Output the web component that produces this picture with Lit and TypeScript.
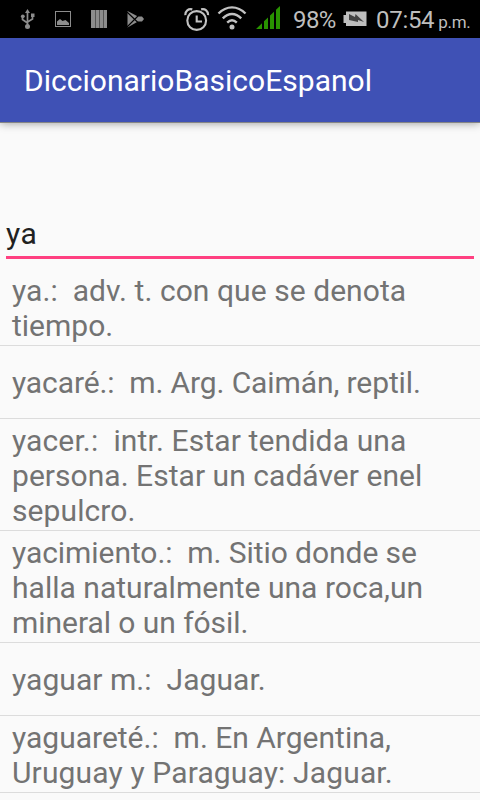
import { LitElement, html, css } from "lit";
import { customElement } from "lit/decorators.js";

interface Line { text: string; spacing: number; }
interface Entry { lines: Line[]; height: number; }

const line = (text: string, spacing = 0): Line => ({ text, spacing });

const ENTRIES: Entry[] = [
  { lines: [line("ya.:\u00a0 adv. t. con que se denota", 0.06), line("tiempo.")], height: 77 },
  { lines: [line("yacaré.:\u00a0 m. Arg. Caimán, reptil.", -0.1)], height: 73 },
  { lines: [line("yacer.:\u00a0 intr. Estar tendida una", 0.12), line("persona. Estar un cadáver enel", 0.04), line("sepulcro.", 0.1)], height: 112 },
  { lines: [line("yacimiento.:\u00a0 m. Sitio donde se", -0.06), line("halla naturalmente una roca,un", 0.02), line("mineral o un fósil.", -0.05)], height: 112 },
  { lines: [line("yaguar m.:\u00a0 Jaguar.", 0.05)], height: 73 },
  { lines: [line("yaguareté.:\u00a0 m. En Argentina,"), line("Uruguay y Paraguay: Jaguar.", 0.14)], height: 77 },
];

@customElement("status-bar")
export class StatusBar extends LitElement {
  static styles = css`
    :host { display: flex; height: 38px; background: #000; color: #bebebe; font-family: Roboto, sans-serif; }
    svg { flex: none; }
    .left { width: 292px; }
    .pct { width: 50px; font-size: 24px; line-height: 41px; letter-spacing: -0.6px; padding-left: 1px; box-sizing: border-box; }
    .battery { width: 34px; }
    .time { font-size: 24px; line-height: 41px; white-space: nowrap; letter-spacing: -0.3px; }
    .suffix { font-size: 17px; margin-left: 4px; letter-spacing: -0.3px; }
  `;
  render() {
    return html`
      <svg class="left" width="292" height="38" viewBox="0 0 292 38" fill="none">
        <g stroke="#8c8c8c" stroke-width="1.7">
          <path d="M27.500 12V26M22.500 17.500V19.500L27.500 23M32.500 16.500V19L27.500 22"/>
        </g>
        <g fill="#8c8c8c">
          <path d="M27.500 9L30 13H25zM31 13.500h3.500v3.500H31z"/>
          <circle cx="22.800" cy="16.300" r="1.900"/><circle cx="27.500" cy="26.500" r="2.500"/>
        </g>
        <rect x="55.500" y="11.500" width="15" height="15" stroke="#8c8c8c"/>
        <path d="M57 25V21.500L60 19L62.500 21L65.500 20L69 23V25z" fill="#8c8c8c"/>
        <path d="M91 10h16v18H91z" fill="#8c8c8c"/>
        <path d="M95.500 10v18M99.500 10v18M103.500 10v18" stroke="#555"/>
        <path d="M127.500 11L138 16.500H142L144 19L142 21.500H138L127.500 27.500z" fill="#8c8c8c"/>
        <path d="M127 12L138 22.500M127 27L138 16" stroke="#000" stroke-width="1.100"/>
        <g stroke="#c2c2c2" stroke-width="2.100">
          <circle cx="196.700" cy="20.500" r="9.400"/>
          <path d="M196.700 15.500V21.500H202"/>
          <path d="M185.300 15.200C185 11 188.500 8.300 192.300 9.400M208.100 15.200C208.400 11 205 8.300 201.100 9.400" stroke-width="2.200"/>
        </g>
        <g stroke="#c2c2c2" stroke-width="2.400">
          <path d="M218.500 13.500C226.500 5.300 237.500 5.300 245.500 13.500M222.800 18.300C228.500 12.500 235.500 12.500 241.200 18.300M227.200 22.600C230.200 19.700 233.800 19.700 236.800 22.600"/>
        </g>
        <circle cx="232" cy="27" r="2.500" fill="#c2c2c2"/>
        <path d="M256 29L262 23.300V29zM264 29V21.300L268 17.500V29zM270 29V15.600L274 11.700V29zM276 29V9.800L280 6V29z" fill="#299400"/>
      </svg>
      <div class="pct"><span>98%</span></div>
      <svg class="battery" width="34" height="38" viewBox="0 0 34 38">
        <path d="M4 11.500H24.500V26H4V23H1.500V15H4z" fill="#bebebe"/>
        <path d="M7 14L13 17L13.500 14L22 22L16 20V22L7 20z" fill="#444"/>
      </svg>
      <div class="time"><span>07:54</span><span class="suffix">p.m.</span></div>`;
  }
}

@customElement("app-root")
export class AppRoot extends LitElement {
  static styles = css`
    :host { display: block; width: 480px; height: 800px; overflow: hidden; background: #fafafa; font-family: Roboto, sans-serif; }
    .bar { box-sizing: border-box; height: 84px; background: #3f51b5; color: #fff; display: flex; align-items: center; padding-left: 24px; font-size: 30px; letter-spacing: 0.02px; box-shadow: 0 1px 0 #858585, 0 1px 9px rgba(0,0,0,.4); }
    .field { margin: 94px 6px 0; height: 40px; border-bottom: 3px solid #ff4081; font-size: 30px; letter-spacing: 0.6px; line-height: 35px; color: #212121; }
    .list { padding-top: 10px; }
    .row { box-sizing: border-box; padding: 0 12px; border-bottom: 1px solid #dcdcdc; display: flex; flex-direction: column; justify-content: center; font-size: 30px; line-height: 35px; color: #737373; }
    .multi { padding-top: 2px; }
    .line { white-space: nowrap; }
  `;
  render() {
    return html`
      <status-bar></status-bar>
      <div class="bar"><span>DiccionarioBasicoEspanol</span></div>
      <div class="field"><span>ya</span></div>
      <div class="list">${ENTRIES.map(e => html`
        <div class="row ${e.lines.length > 1 ? "multi" : ""}" style="height:${e.height}px">
          ${e.lines.map(l => html`<div class="line" style="letter-spacing:${l.spacing}px"><span>${l.text}</span></div>`)}
        </div>`)}
      </div>`;
  }
}
